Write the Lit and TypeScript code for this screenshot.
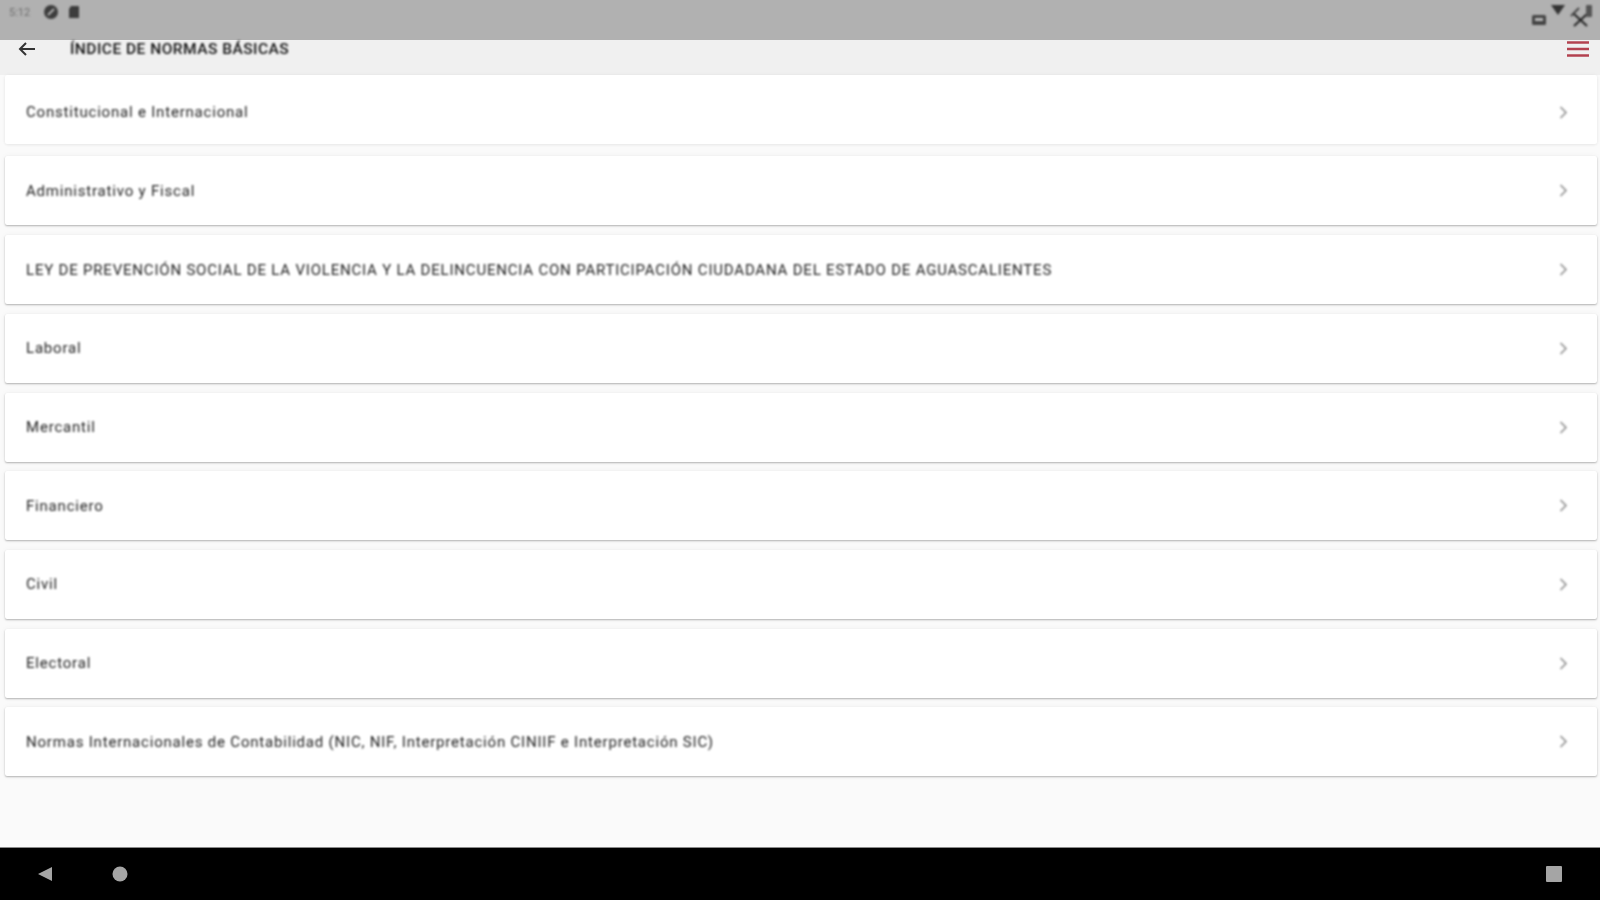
import { LitElement, html, css } from "lit";
import { customElement } from "lit/decorators.js";

const ITEMS = [
  "Constitucional e Internacional",
  "Administrativo y Fiscal",
  "LEY DE PREVENCIÓN SOCIAL DE LA VIOLENCIA Y LA DELINCUENCIA CON PARTICIPACIÓN CIUDADANA DEL ESTADO DE AGUASCALIENTES",
  "Laboral",
  "Mercantil",
  "Financiero",
  "Civil",
  "Electoral",
  "Normas Internacionales de Contabilidad (NIC, NIF, Interpretación CINIIF e Interpretación SIC)",
];

@customElement("app-root")
export class AppRoot extends LitElement {
  static styles = css`
    :host { display: flex; flex-direction: column; height: 900px; width: 1600px; overflow: hidden;
      background: #fafafa; font-family: Roboto, "Liberation Sans", sans-serif; }
    .status { height: 40px; flex: none; background: #b1b1b1; display: flex; justify-content: space-between; box-sizing: border-box; padding: 0 4px 0 9px; }
    .status-left { display: flex; align-items: center; height: 24px; gap: 9px; filter: blur(0.9px); }
    .time { font-size: 11px; color: #6f6f6f; width: 25px; }
    .status-right { display: flex; align-items: flex-start; filter: blur(0.9px); }
    .toolbar { height: 35px; flex: none; background: #f0f0f0; display: flex; align-items: center; box-sizing: border-box; padding: 0 10px 18px 18px; }
    .back { flex: none; display: block; filter: blur(0.5px); }
    .title { margin-left: 34px; flex: 1; font-size: 15.5px; font-weight: 500; letter-spacing: 0.48px; color: #111; filter: blur(0.8px); }
    .menu { flex: none; display: block; filter: blur(0.5px); }
    .list { flex: 1; display: flex; flex-direction: column; gap: 9.7px; padding: 0 3px 0 5px; }
    .card { height: 69px; flex: none; background: #fff; display: flex; align-items: center; justify-content: space-between; box-sizing: border-box; padding: 0 29px 0 21px;
      box-shadow: 0 1px 2px rgba(0,0,0,.28), 0 0 6px rgba(0,0,0,.04); border-radius: 2px; }
    .card:first-child { padding-top: 5px; margin-bottom: 2.8px; box-shadow: 0 1px 3px rgba(0,0,0,.06), 0 0 4px rgba(0,0,0,.04); }
    .label { font-size: 15px; letter-spacing: 0.8px; color: #222; filter: blur(0.8px); }
    .chev { flex: none; display: block; filter: blur(0.8px); }
    .nav { height: 53px; flex: none; background: #000; border-top: 1px solid #8a8a8a; display: flex; align-items: center; box-sizing: border-box; padding: 0 38px 0 37px; }
    .nav svg { display: block; filter: blur(0.6px); }
    .nav .home { margin-left: 59px; }
    .nav .recents { margin-left: auto; }
  `;

  render() {
    return html`
      <div class="status">
        <div class="status-left">
          <span class="time">5:12</span>
          <svg width="16" height="16" viewBox="0 0 16 16"><circle cx="8" cy="8" r="7" fill="#3c3c3c"/><path d="M5 11 L11 5" stroke="#b1b1b1" stroke-width="2"/></svg>
          <svg width="12" height="14" viewBox="0 0 12 14"><path d="M1 4 L3 1 H10 A1 1 0 0 1 11 2 V13 H1 Z" fill="#3c3c3c"/></svg>
        </div>
        <div class="status-right">
          <svg width="64" height="30" viewBox="0 0 64 30">
            <rect x="0" y="15" width="14" height="10" rx="1.5" fill="#444"/>
            <rect x="3" y="18" width="8" height="3" fill="#bbb"/>
            <path d="M19 5 H33 L26 15 Z" fill="#333"/>
            <path d="M39 16 L47 8" stroke="#444" stroke-width="2"/>
            <path d="M42 14 L55 26 M55 14 L42 26" stroke="#222" stroke-width="2"/>
            <rect x="54" y="5" width="6" height="12" rx="1" fill="#555"/>
          </svg>
        </div>
      </div>
      <div class="toolbar">
        <svg class="back" width="18" height="16" viewBox="0 0 18 16"><path d="M17 8 H2 M8 2 L2 8 L8 14" fill="none" stroke="#333" stroke-width="2"/></svg>
        <div class="title">ÍNDICE DE NORMAS BÁSICAS</div>
        <svg class="menu" width="24" height="18" viewBox="0 0 24 18"><path d="M1 2.5 H23 M1 9 H23 M1 15.5 H23" stroke="#b3414f" stroke-width="2.4"/></svg>
      </div>
      <div class="list">
        ${ITEMS.map((t) => html`
          <div class="card">
            <span class="label">${t}</span>
            <svg class="chev" width="9" height="13" viewBox="0 0 9 13"><path d="M1.5 1 L7 6.5 L1.5 12" fill="none" stroke="#888" stroke-width="1.5"/></svg>
          </div>`)}
      </div>
      <div class="nav">
        <svg width="16" height="16" viewBox="0 0 16 16"><path d="M15 1 V15 L1 8 Z" fill="#a5a5a5"/></svg>
        <svg class="home" width="16" height="16" viewBox="0 0 16 16"><circle cx="8" cy="8" r="7.5" fill="#a5a5a5"/></svg>
        <svg class="recents" width="16" height="16" viewBox="0 0 16 16"><rect width="16" height="16" rx="1" fill="#a5a5a5"/></svg>
      </div>
    `;
  }
}
